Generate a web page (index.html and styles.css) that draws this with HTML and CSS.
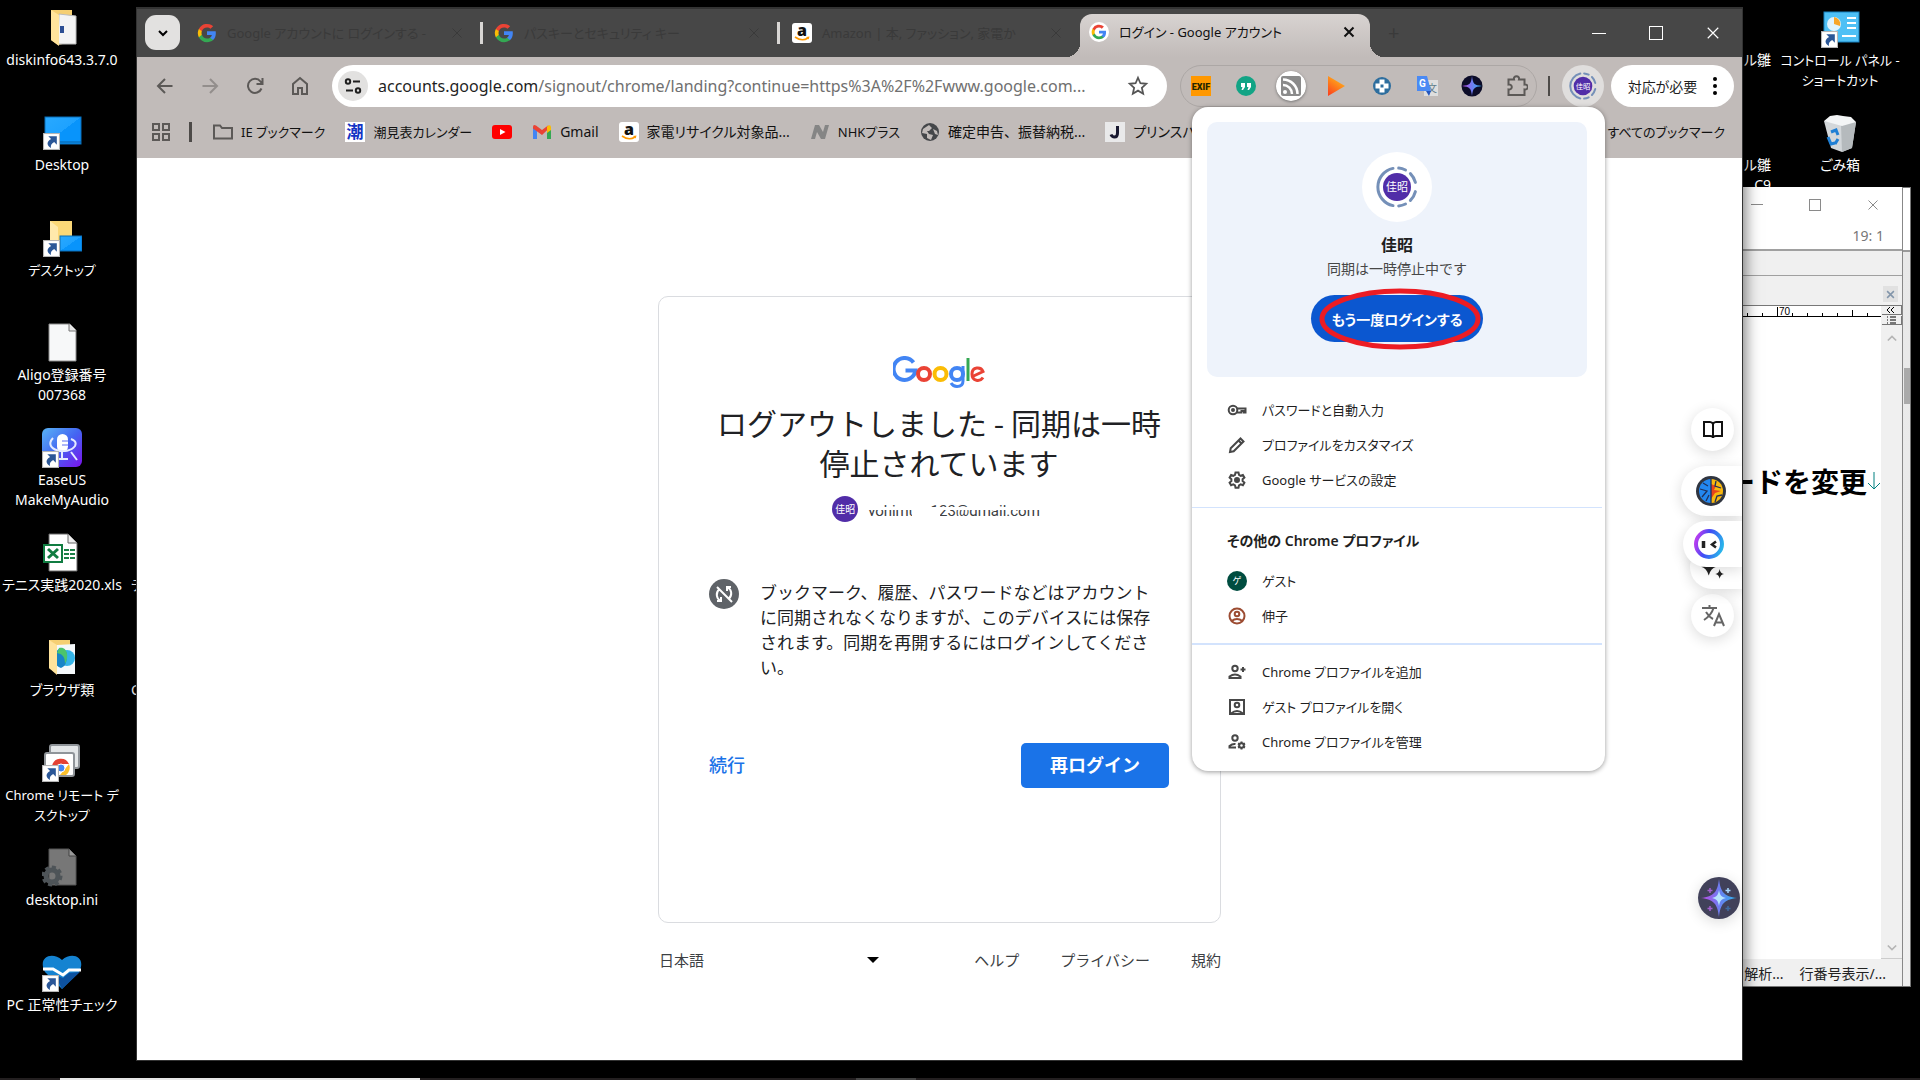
FILE: index.html
```html
<!DOCTYPE html>
<html lang="ja">
<head>
<meta charset="utf-8">
<title>ログイン - Google アカウント</title>
<link rel="stylesheet" href="styles.css">
</head>
<body>
<svg class="defs" aria-hidden="true">
  <defs>
    <linearGradient id="rainbow" x1="0" y1="0" x2="1" y2="0"><stop offset="0" stop-color="#c04be8"/><stop offset="0.5" stop-color="#6f7cf0"/><stop offset="1" stop-color="#2bb6f0"/></linearGradient>
    <linearGradient id="play" x1="0" y1="1" x2="0.6" y2="0"><stop offset="0" stop-color="#fb3b1e"/><stop offset="1" stop-color="#ffb31a"/></linearGradient>
    <linearGradient id="ring" x1="0" y1="0.4" x2="1" y2="0.7"><stop offset="0" stop-color="#b33df0"/><stop offset="0.4" stop-color="#3f4cf5"/><stop offset="1" stop-color="#29b5ea"/></linearGradient>
    <linearGradient id="ease" x1="0" y1="0" x2="1" y2="1"><stop offset="0" stop-color="#58b4f5"/><stop offset="0.5" stop-color="#4465f2"/><stop offset="1" stop-color="#7b12ec"/></linearGradient>
    <linearGradient id="screen" x1="0" y1="0" x2="1" y2="1"><stop offset="0" stop-color="#29a9ff"/><stop offset="0.5" stop-color="#1ea2ff"/><stop offset="0.5" stop-color="#0894fb"/><stop offset="1" stop-color="#0894fb"/></linearGradient>
    <symbol id="g" viewBox="0 0 24 24">
      <path fill="#4285f4" d="M22.6 12.2c0-.8-.1-1.500-.2-2.200H12v4.300h5.900c-.3 1.400-1 2.500-2.200 3.300v2.800h3.600c2.100-1.900 3.300-4.700 3.300-8.200z"/>
      <path fill="#34a853" d="M12 23c3 0 5.500-1 7.300-2.600l-3.600-2.800c-1 .7-2.200 1.100-3.700 1.100-2.900 0-5.300-1.900-6.200-4.500H2.200v2.800C4 20.500 7.700 23 12 23z"/>
      <path fill="#fbbc05" d="M5.800 14.200a6.600 6.600 0 0 1 0-4.300V7.100H2.200a11 11 0 0 0 0 9.900z"/>
      <path fill="#ea4335" d="M12 5.400c1.600 0 3.100.6 4.200 1.600l3.200-3.100A11 11 0 0 0 2.200 7.100l3.600 2.800C6.700 7.300 9.100 5.400 12 5.400z"/>
    </symbol>
    <symbol id="x" viewBox="0 0 12 12"><path d="M1.500 1.500l9 9M10.500 1.500l-9 9" stroke="currentColor" fill="none"/></symbol>
    <symbol id="shortcut" viewBox="0 0 16 16"><rect x=".5" y=".5" width="15" height="15" fill="#fff" stroke="#b5b5b5"/><path d="M5 3h8v8l-2.500-2.500C8 10 7 11.500 7.500 14 3.500 12 3 8 7.600 5.600z" fill="#2b5797"/></symbol>
    <symbol id="amazon" viewBox="0 0 20 20"><rect width="20" height="20" rx="3" fill="#fff"/><text x="10" y="13" font-family="Open Sans, sans-serif" font-weight="800" font-size="16" text-anchor="middle" fill="#111">a</text><path d="M3 14q7 5 13 1" fill="none" stroke="#f90" stroke-width="1.600"/><path d="M14 14l3.500-.5-.8 3" fill="#f90"/></symbol>
    <symbol id="avatar" viewBox="0 0 42 42"><circle cx="21" cy="21" r="14" fill="#512da8"/><path d="M17 39.600A19 19 0 0 1 17 2.400M22.700 2.100A19 19 0 0 1 29.500 4M34.400 7.600A19 19 0 0 1 39.400 16.400M39.400 25.600A19 19 0 0 1 34.400 34.400M29.500 38A19 19 0 0 1 22.700 39.900" fill="none" stroke="#7590b8" stroke-width="3" stroke-linecap="round"/><text x="21" y="25" font-size="11" font-family="Noto Sans CJK JP, sans-serif" text-anchor="middle" fill="#fff">佳昭</text></symbol>
    <symbol id="cosmic" viewBox="0 0 42 42"><circle cx="21" cy="21" r="21" fill="#41415a"/><path d="M21 2c1.500 13 5 17.500 18 19-13 1.500-16.500 6-18 19-1.500-13-5-17.500-18-19C16 19.500 19.500 15 21 2z" fill="url(#rainbow)"/><path d="M21 13c1 5 2 7 7 8-5 1-6 3-7 8-1-5-2-7-7-8 5-1 6-3 7-8z" fill="#b6e4fd"/><path d="M12 11v5M9.500 13.500h5M12 29v5M9.500 31.500h5" stroke="#a45fd0" stroke-width="1.500"/><path d="M30 11v5M27.500 13.500h5" stroke="#a9d8ff" stroke-width="1.500"/><path d="M30 29v5M27.500 31.500h5" stroke="#3f6aa0" stroke-width="1.500"/></symbol>
  </defs>
</svg>

<main class="desktop">
  <ul class="icons icons-left">
    <li><svg class="ico" viewBox="0 0 40 40"><path d="M9 2h21v32l-14 3-7-5z" fill="#f5cf73"/><path d="M17 6l17 2v28H16z" fill="#f4f4f4" stroke="#bbb"/><path d="M9 2l8 5v31l-8-6z" fill="#ffe39c"/><rect x="18" y="18" width="4" height="7" fill="#2d4f93"/></svg><span>diskinfo643.3.7.0</span></li>
    <li><svg class="ico" viewBox="0 0 40 40"><rect x="3" y="4" width="36" height="27" fill="url(#screen)" stroke="#0a6fb8"/><path d="M4 29h35" stroke="#0b5f9e"/><use href="#shortcut" x="1" y="20" width="17" height="17"/></svg><span>Desktop</span></li>
    <li><svg class="ico" viewBox="0 0 40 40"><rect x="8" y="3" width="22" height="26" fill="#fbd878"/><path d="M8 3l8 6v20H8z" fill="#ffe9ab"/><rect x="18" y="18" width="22" height="15" fill="url(#screen)" stroke="#0a6fb8"/><use href="#shortcut" x="1" y="22" width="17" height="17"/></svg><span class="kana">デスクトップ</span></li>
    <li><svg class="ico" viewBox="0 0 40 40"><path d="M7 1h21l6 6v31H7z" fill="#f7f8f9" stroke="#8c8c8c"/><path d="M27 1v7h7" fill="#e4e4e4" stroke="#777"/></svg><span>Aligo登録番号<br>007368</span></li>
    <li><svg class="ico" viewBox="0 0 40 40"><rect width="40" height="39" rx="6" fill="url(#ease)"/><rect x="15" y="6" width="11" height="18" rx="5.500" fill="#fff"/><path d="M20 13h6M20 17h6" stroke="#5c6ff0"/><path d="M11 10C0 22 26 28 33 18c2-4-1-6-4-7M20 24v7M14 31h12M29 24l6 8" fill="none" stroke="#e5ecff" stroke-width="2"/><use href="#shortcut" x="0" y="23" width="17" height="17"/></svg><span>EaseUS<br>MakeMyAudio</span></li>
    <li><svg class="ico" viewBox="0 0 40 40"><path d="M7 1h19l9 9v28H7z" fill="#fff" stroke="#666"/><path d="M26 1v9h9" fill="#eee" stroke="#666"/><path d="M22 17h11M22 21h11M22 25h11" stroke="#1c7f47" stroke-width="2" stroke-dasharray="5 1"/><rect x="2" y="12" width="18" height="17" fill="#fff" stroke="#107c41" stroke-width="2"/><path d="M6 16l10 9M16 16L6 25" stroke="#107c41" stroke-width="3"/></svg><span>テニス実践2020.xls</span></li>
    <li><svg class="ico" viewBox="0 0 40 40"><path d="M7 2h21v33H14l-7-5z" fill="#f5cf73"/><path d="M15 7l18-1v30H15z" fill="#f4f8fb"/><circle cx="25" cy="20" r="8" fill="#35b4e8"/><path d="M14 15c3-9 12-4 11 4s-2 9-6 11c-7-2-6-8-5-15z" fill="#1784c7"/><path d="M17 10c9-2 10 10 6 16 0-8-3-10-8-11z" fill="#4bc46c"/><path d="M7 2l8 5v30l-8-7z" fill="#ffe39c"/></svg><span>ブラウザ類</span></li>
    <li><svg class="ico" viewBox="0 0 40 40"><rect x="8" y="2" width="29" height="23" rx="2" fill="#e3e6e8" stroke="#8f9499" stroke-width="2"/><rect x="3" y="10" width="29" height="23" rx="2" fill="#fff" stroke="#8f9499" stroke-width="2"/><path d="M10 23a9 9 0 0 1 17-2H19z" fill="#e34133"/><path d="M27 21a9 9 0 0 1-3 11h-6z" fill="#fbc02d"/><circle cx="19" cy="25" r="4" fill="#4285f4" stroke="#fff"/><use href="#shortcut" x="0" y="22" width="17" height="17"/></svg><span class="kana">Chrome リモート デ<br>スクトップ</span></li>
    <li><svg class="ico" viewBox="0 0 40 40"><path d="M7 1h20l7 7v29H7z" fill="#777" stroke="#555"/><path d="M27 1v7h7" fill="#999" stroke="#444"/><circle cx="10" cy="28" r="6" fill="none" stroke="#4e5458" stroke-width="5"/><circle cx="10" cy="28" r="9" fill="none" stroke="#4e5458" stroke-width="3" stroke-dasharray="4 3"/></svg><span>desktop.ini</span></li>
    <li><svg class="ico" viewBox="0 0 40 40"><path d="M20 36L3 19C-5 4 10-2 20 7c10-9 25-3 17 12z" fill="#1583d1"/><path d="M13 22l8 3 6-5 11-1-18 17z" fill="#0d52a0"/><path d="M1 16h10l10 6 6-5h12" fill="none" stroke="#fff" stroke-width="3"/><use href="#shortcut" x="0" y="22" width="17" height="17"/></svg><span>PC 正常性チェック</span></li>
  </ul>
  <ul class="icons icons-second"><li><span>テ</span></li><li><span>C</span></li></ul>
  <ul class="icons icons-third"><li><span>メール雛</span></li><li><span>メール雛<br>C9</span></li></ul>
  <ul class="icons icons-right">
    <li><svg class="ico" viewBox="0 0 40 40"><rect x="4" y="4" width="35" height="30" fill="#4fc0f5" stroke="#1883c2"/><circle cx="14" cy="16" r="7" fill="#dff3ff"/><path d="M14 16V9a7 7 0 0 1 6 9z" fill="#f7a52a"/><path d="M27 10h9M27 15h9M27 20h9M22 28h14" stroke="#fff" stroke-width="2"/><use href="#shortcut" x="1" y="23" width="17" height="17"/></svg><span class="kana">コントロール パネル -<br>ショートカット</span></li>
    <li><svg class="ico" viewBox="0 0 40 40"><path d="M4 8l32 1-4 26-10 4-11-4z" fill="#d3d7da"/><path d="M21 11l15-2-4 26-10 4z" fill="#b5babd"/><path d="M4 8l6-5 7-1 6 1 8 1 5 5-14 4z" fill="#f3f5f6"/><path d="M11 19l5-2 2 5M8 24l3 7 4-1M18 26l-3 5" fill="none" stroke="#1f7fd4" stroke-width="3"/></svg><span>ごみ箱</span></li>
  </ul>

  <section class="editor-back" aria-hidden="true"><i></i></section>
  <section class="editor">
    <div class="ed-title"><button aria-label="最小化"><svg viewBox="0 0 12 12"><path d="M0 5.500h12" stroke="currentColor"/></svg></button><button aria-label="最大化"><svg viewBox="0 0 12 12"><rect x=".5" y=".5" width="11" height="11" fill="none" stroke="currentColor"/></svg></button><button aria-label="閉じる"><svg><use href="#x"/></svg></button></div>
    <div class="ed-pos">19: 1</div>
    <div class="ed-band"></div>
    <div class="ed-tabs"><button aria-label="タブを閉じる"><svg stroke-width="2"><use href="#x"/></svg></button></div>
    <div class="ed-main">
      <div class="ed-doc">
        <div class="ruler"><svg viewBox="0 0 140 12"><path d="M0 10.500h140M6.500 7v4M21.500 7v4M36.500 1v10M51.500 7v4M66.500 7v4M81.500 7v4M96.500 7v4M111.500 4v7M126.500 7v4" stroke="#000" fill="none"/><text x="38" y="9" font-size="10" font-family="Liberation Sans, sans-serif">70</text></svg></div>
        <p class="ed-text">ードを変更<svg viewBox="0 0 14 20" width="14" height="20"><path d="M7 1v17M1 12l6 6 6-6" fill="none" stroke="#008080"/></svg></p>
      </div>
      <div class="ed-scroll">
        <button aria-label="分割"><svg viewBox="0 0 18 8"><path d="M8 1L5 4l3 3M12 1L9 4l3 3"/></svg></button>
        <button aria-label="一覧"><svg viewBox="0 0 18 8"><path d="M8 1h6M8 4h6M8 7h6M5 1h1M5 4h1M5 7h1"/></svg></button>
        <svg class="arrow" viewBox="0 0 12 8"><path d="M1 7l5-5 5 5"/></svg><svg class="arrow end" viewBox="0 0 12 8"><path d="M1 1l5 5 5-5"/></svg>
      </div>
    </div>
    <div class="ed-status"><span>解析...</span><span>行番号表示/...</span></div>
  </section>

  <section class="browser">
    <header class="tabstrip">
      <button class="tab-search" aria-label="タブを検索"><svg viewBox="0 0 12 12" width="12" height="12"><path d="M2 4l4 4 4-4" fill="none" stroke="#000" stroke-width="2"/></svg></button>
      <div class="tab tab-a"><svg class="fav"><use href="#g"/></svg><span>Google アカウントに ログインする -</span><button aria-label="閉じる"><svg><use href="#x"/></svg></button></div>
      <div class="tab tab-b"><svg class="fav"><use href="#g"/></svg><span>パスキーとセキュリティ キー</span><button aria-label="閉じる"><svg><use href="#x"/></svg></button></div>
      <div class="tab tab-c"><svg class="fav"><use href="#amazon"/></svg><span>Amazon | 本, ファッション, 家電か</span><button aria-label="閉じる"><svg><use href="#x"/></svg></button></div>
      <div class="tab active"><svg class="fav" viewBox="0 0 20 20"><circle cx="10" cy="10" r="10" fill="#fff"/><use href="#g" x="2" y="2" width="16" height="16"/></svg><span>ログイン - Google アカウント</span><button aria-label="閉じる"><svg stroke-width="2"><use href="#x"/></svg></button></div>
      <button class="new-tab" aria-label="新しいタブ">+</button>
      <div class="win-buttons"><button aria-label="最小化"><svg viewBox="0 0 14 14"><path d="M0 7.500h14" stroke="#fff"/></svg></button><button aria-label="最大化"><svg viewBox="0 0 14 14"><rect x=".5" y=".5" width="13" height="13" fill="none" stroke="#fff"/></svg></button><button aria-label="閉じる"><svg><use href="#x"/></svg></button></div>
    </header>

    <div class="toolbar">
      <nav class="nav">
        <button aria-label="戻る"><svg viewBox="0 0 20 20"><path d="M17.500 10H3.500M10 3l-7 7 7 7"/></svg></button>
        <button aria-label="進む" class="off"><svg viewBox="0 0 20 20"><path d="M2.500 10h14M10 3l7 7-7 7"/></svg></button>
        <button aria-label="再読み込み"><svg viewBox="0 0 20 20"><path d="M16.500 12.500a7 7 0 1 1-1-7L17 7.500M17.500 2v6h-6"/></svg></button>
        <button aria-label="ホーム"><svg viewBox="0 0 20 20"><path d="M3 18V8l7-6 7 6v10h-5v-6H8v6z"/></svg></button>
      </nav>
      <div class="omnibox">
        <button class="site" aria-label="サイト情報"><svg viewBox="0 0 20 20" width="20" height="20" fill="none" stroke="#1f1f1f" stroke-width="2"><circle cx="5" cy="5.500" r="2.200"/><path d="M10 5.500h7M3 14.500h7"/><circle cx="15" cy="14.500" r="2.200"/></svg></button>
        <span class="url"><b>accounts.google.com</b>/signout/chrome/landing?continue=https%3A%2F%2Fwww.google.com...</span>
        <button class="star" aria-label="ブックマーク"><svg viewBox="0 0 20 20" width="22" height="22"><path d="M10 2.500l2.200 5 5.300.5-4 3.600 1.200 5.400-4.700-2.800L5.300 17l1.200-5.400-4-3.600 5.300-.5z" fill="none" stroke="#555" stroke-width="1.600"/></svg></button>
      </div>
      <div class="extensions">
        <svg viewBox="0 0 22 22"><rect x="1" y="1" width="20" height="20" fill="#ff9800"/><text x="11" y="15" font-size="9" font-weight="900" text-anchor="middle" font-family="Roboto, sans-serif" fill="#252500">EXIF</text></svg>
        <svg viewBox="0 0 22 22"><circle cx="11" cy="11" r="10" fill="#12a485"/><path d="M6 8h4v4l-2 3H6.500l1-3H6zM12 8h4v4l-2 3h-1.500l1-3H12z" fill="#fff"/></svg>
        <svg class="round" viewBox="0 0 30 30"><circle cx="15" cy="15" r="15" fill="#fff"/><rect x="5" y="5" width="20" height="20" rx="2" fill="#8b8b8b"/><circle cx="9" cy="21" r="2" fill="#fff"/><path d="M7 14a9 9 0 0 1 9 9M7 8.500A14.500 14.500 0 0 1 21.500 23" fill="none" stroke="#fff" stroke-width="2.500"/></svg>
        <svg viewBox="0 0 22 22"><path d="M3 1l17 10L3 21z" fill="url(#play)"/></svg>
        <svg viewBox="0 0 22 22"><circle cx="11" cy="11" r="9" fill="#2e6e9e"/><path d="M11 4.500v13M4.500 11h13" stroke="#fff" stroke-width="5"/><path d="M9.500 11h3" stroke="#2e6e9e" stroke-width="3"/></svg>
        <svg viewBox="0 0 22 22"><rect x="8" y="5" width="14" height="16" fill="#dedede"/><text x="11" y="17" font-size="10" font-family="Noto Sans CJK JP, sans-serif" fill="#607d8b">文</text><path d="M1 1h10l4 15H1z" fill="#4a8af4"/><text x="3" y="12" font-size="10" font-weight="700" fill="#fff" font-family="Roboto, sans-serif">G</text><path d="M10 16h5l-2 5z" fill="#2456bd"/></svg>
        <svg viewBox="0 0 22 22"><circle cx="11" cy="11" r="10.500" fill="#0c0c28"/><path d="M11 1c1 8 2 9 10 10-8 1-9 2-10 10-1-8-2-9-10-10 8-1 9-2 10-10z" fill="url(#rainbow)"/></svg>
        <svg viewBox="0 0 22 22"><path d="M2.500 4.500h5.500a2.600 2.600 0 1 1 5 0h5.500v5a2.600 2.600 0 1 1 0 5v5.500h-16v-5.500a2.600 2.600 0 1 0 0-5z" fill="none" stroke="#5c5957" stroke-width="2"/></svg>
      </div>
      <i class="bar"></i>
      <button class="profile" aria-label="プロファイル"><svg width="28" height="28"><use href="#avatar"/></svg></button>
      <button class="chip">対応が必要<svg viewBox="0 0 4 20" width="4" height="20"><circle cx="2" cy="3" r="2"/><circle cx="2" cy="10" r="2"/><circle cx="2" cy="17" r="2"/></svg></button>
    </div>

    <nav class="bookmarks">
      <button aria-label="アプリ"><svg viewBox="0 0 20 20" width="20" height="20" fill="none" stroke="#5c5957" stroke-width="2"><path d="M2 2h6v6H2zM12 2h6v6h-6zM2 12h6v6H2zM12 12h6v6h-6z"/></svg></button>
      <i class="bar"></i>
      <a href="#" class="kana"><svg viewBox="0 0 20 20" fill="none" stroke="#5c5957" stroke-width="2"><path d="M1 16.500v-13h6l2 2.500h10v10.500z"/></svg>IE ブックマーク</a>
      <a href="#" class="kana"><svg viewBox="0 0 20 20"><rect width="20" height="20" fill="#fff"/><text x="10" y="16" font-size="17" font-weight="700" text-anchor="middle" font-family="Noto Sans CJK JP, sans-serif" fill="#1534c4">潮</text></svg>潮見表カレンダー</a>
      <a href="#" aria-label="YouTube"><svg viewBox="0 0 20 20"><rect y="3" width="20" height="14" rx="3" fill="#f00"/><path d="M8 7l5.500 3L8 13z" fill="#fff"/></svg></a>
      <a href="#"><svg viewBox="0 0 20 20"><path d="M1 17V5l4 3v9z" fill="#4285f4"/><path d="M19 17V5l-4 3v9z" fill="#34a853"/><path d="M1 5q0-3 3-1.500L10 8l6-4.500 2 2L10 13 1 6.500z" fill="#ea4335"/><path d="M15 4.500q4-3 4 1V8l-4 3z" fill="#fbbc04"/></svg>Gmail</a>
      <a href="#"><svg><use href="#amazon"/></svg>家電リサイクル対象品...</a>
      <a href="#" class="kana"><svg viewBox="0 0 20 20"><path d="M1 17L5 3h4l4 7 2-7h4l-4 14h-4l-4-7-2 7z" fill="#858585"/></svg>NHKプラス</a>
      <a href="#" class="even"><svg viewBox="0 0 20 20"><circle cx="10" cy="10" r="9" fill="#45474a"/><path d="M3 7l6-4 3 3-3 3H7l2 3 4 1-2 5-4-2v-4L2 11zM13 7l4 2 1 4-3-1z" fill="#c1bbb9"/></svg>確定申告、振替納税...</a>
      <a href="#"><svg viewBox="0 0 20 20"><rect width="20" height="20" fill="#e9e9ea"/><path d="M12.500 4v7q0 4-3 4-2.500 0-3.500-2.500" fill="none" stroke="#181830" stroke-width="3"/></svg>プリンスパ</a>
      <a href="#" class="all kana">すべてのブックマーク</a>
    </nav>

    <div class="page">
      <div class="account">
        <article class="card">
          <div class="logo" aria-label="Google"><svg viewBox="0 0 92 32" width="92" height="32" fill="none" stroke-width="4"><path d="M20.500 6.500A11 11 0 1 0 22.500 14.500H12.500" stroke="#4285f4"/><circle cx="31" cy="18" r="6" stroke="#ea4335"/><circle cx="47.500" cy="18" r="6" stroke="#fbbc05"/><circle cx="64" cy="18" r="6" stroke="#4285f4"/><path d="M70 10v15q0 5.500-6 5.500-4 0-6-3.500" stroke="#4285f4" stroke-width="3"/><path d="M75 2v23" stroke="#34a853" stroke-width="3"/><path d="M79.500 20.500L90 15.500c-2-5-11-5-11 2.500s8 8 11 3.500" stroke="#ea4335" stroke-width="3"/></svg></div>
          <h1>ログアウトしました - 同期は一時停止されています</h1>
          <p class="who"><i>佳昭</i><span>yohimuro123@gmail.com</span></p>
          <div class="notice">
            <svg viewBox="0 0 30 30" width="30" height="30"><circle cx="15" cy="15" r="15" fill="#5f6368"/><g fill="none" stroke="#fff" stroke-width="2"><path d="M11 21.500a7 7 0 0 1-1-11M19 8.500a7 7 0 0 1 1 11M8 22h4v-4M22 8h-4v4M8 8l15 15"/></g></svg>
            <p>ブックマーク、履歴、パスワードなどはアカウントに同期されなくなりますが、このデバイスには保存されます。同期を再開するにはログインしてください。</p>
          </div>
          <div class="actions"><a href="#">続行</a><button>再ログイン</button></div>
        </article>
        <footer>
          <button class="lang">日本語<svg viewBox="0 0 12 6" width="12" height="6"><path d="M0 0h12L6 6z"/></svg></button>
          <nav><a href="#">ヘルプ</a><a href="#">プライバシー</a><a href="#">規約</a></nav>
        </footer>
      </div>

      <aside class="floats">
        <button class="f-round" aria-label="リーダー"><svg viewBox="0 0 22 22" width="22" height="22" fill="none" stroke="#111" stroke-width="2"><path d="M11 5v14M11 5q-1-2-3-2H2v14h6q3 0 3 2 0-2 3-2h6V3h-6q-2 0-3 2z"/></svg></button>
        <button class="f-pill" aria-label="AI"><svg viewBox="0 0 30 30" width="30" height="30"><circle cx="15" cy="15" r="15" fill="#303540"/><path d="M15 3a12 12 0 0 0 0 24z" fill="#2387f0"/><path d="M15 3a12 12 0 0 1 0 24z" fill="#f9b80e"/><path d="M15 8l5 2-2 4 7 1-6 2-4 6z" fill="#e8441c"/><path d="M15 3v24M4 13l7 2-5 6M7 7l5 3M13 19l-3 6M20 5l-1 5 6 2M19 26l2-6 5-1" fill="none" stroke="#20305a" stroke-width="1.300"/></svg></button>
        <button class="f-pill robot" aria-label="アシスタント"><svg viewBox="0 0 30 30" width="30" height="30"><circle cx="15" cy="15" r="13" fill="#fff" stroke="url(#ring)" stroke-width="4"/><path d="M9.500 12v7" stroke="#222" stroke-width="3.500"/><path d="M22 12.500l-4 3 4 3" fill="none" stroke="#222" stroke-width="2.500"/></svg></button>
        <button class="f-pill spark" aria-label="生成"><svg viewBox="0 0 22 22" width="24" height="24"><path d="M8 1q1 8 7 8-5 1-7 8-2-7-7-8 6 0 7-8zM18 11q.5 4 4 4.500-3.500.5-4 4.500-.5-4-4-4.500 3.500-.5 4-4.500z" fill="#222"/></svg></button>
        <button class="f-round" aria-label="翻訳"><svg viewBox="0 0 24 24" width="24" height="24" fill="none" stroke="#666" stroke-width="2"><path d="M1 4h15M8.500 1v3M12.500 4q-2 7-9.500 12M5 8q3 5 7 7M13 22l5-12 5 12M15 18.500h6.500"/></svg></button>
        <button class="f-cosmic" aria-label="AI 検索"><svg width="42" height="42"><use href="#cosmic"/></svg></button>
      </aside>
    </div>

    <div class="popover" role="menu">
      <div class="me">
        <div class="face"><svg width="42" height="42"><use href="#avatar"/></svg></div>
        <h2>佳昭</h2>
        <p class="even">同期は一時停止中です</p>
        <button class="again">もう一度ログインする<svg class="mark" viewBox="0 0 162 62"><ellipse cx="81" cy="31" rx="78" ry="28" fill="none" stroke="#ec1c24" stroke-width="5"/></svg></button>
      </div>
      <ul>
        <li><svg viewBox="0 0 20 20"><circle cx="6" cy="10" r="4.300"/><circle cx="6" cy="10" r="1" /><path d="M10 8.500h8.500v4h-1.500v-1.500h-2.500v1.500H10"/></svg>パスワードと自動入力</li>
        <li><svg viewBox="0 0 20 20"><path d="M3 17l.7-3.700L13.500 3.500l3 3L6.700 16.300zM11.500 5.500l3 3"/></svg>プロファイルをカスタマイズ</li>
        <li><svg viewBox="0 0 20 20"><path d="M8.500 2.500h3l.5 2.300 1.700 1 2.200-.8 1.500 2.600-1.800 1.600v1.800l1.800 1.600-1.500 2.600-2.200-.8-1.700 1-.5 2.300h-3L8 15.400l-1.700-1-2.200.8-1.500-2.600L4.400 11V9.200L2.600 7.600 4.100 5l2.200.8L8 4.800z"/><circle cx="10" cy="10" r="2" fill="#474747"/></svg>Google サービスの設定</li>
      </ul>
      <h3>その他の Chrome プロファイル</h3>
      <ul class="others">
        <li><i>ゲ</i>ゲスト</li>
        <li><svg class="rust" viewBox="0 0 20 20"><circle cx="10" cy="10" r="7.500"/><circle cx="10" cy="8" r="2.300"/><path d="M4.500 15q5.500-4 11 0"/></svg>伸子</li>
      </ul>
      <ul class="last">
        <li><svg viewBox="0 0 20 20"><circle cx="8" cy="6.500" r="2.700"/><path d="M2.500 16v-1.500q5.500-4 11 0V16zM16 5v5M13.500 7.500h5"/></svg>Chrome プロファイルを追加</li>
        <li><svg viewBox="0 0 20 20"><path d="M3 3h14v14H3zM4 16.500q6-5 12 0"/><circle cx="10" cy="8" r="2.300"/></svg>ゲスト プロファイルを開く</li>
        <li><svg viewBox="0 0 20 20"><circle cx="8" cy="6" r="2.700"/><path d="M9 15.500H2.500V14q3-2.500 6-2"/><circle cx="14.500" cy="13.500" r="2.300"/><path d="M14.500 9.500v2M14.500 15.500v2M11 11.500l2 1M16 14.500l2 1M11 15.500l2-1M16 12.500l2-1"/></svg>Chrome プロファイルを管理</li>
      </ul>
    </div>
  </section>
  <div class="taskbar"><i></i><b></b></div>
</main>
</body>
</html>
```

FILE: styles.css
```css
* { box-sizing: border-box; }
body { margin: 0; background: #000; font-family: "Noto Sans", "Noto Sans CJK JP", sans-serif; font-size: 14px; color: #1f1f1f; }
button { border: 0; padding: 0; background: none; font: inherit; color: inherit; display: flex; align-items: center; justify-content: center; }
ul { list-style: none; margin: 0; padding: 0; }
h1, h2, h3, p { margin: 0; font-weight: 400; }
a { color: inherit; text-decoration: none; }
i, b { font-style: normal; font-weight: 400; }
.kana { font-size: 13px; }
.even { font-feature-settings: normal; }
.defs { position: absolute; width: 0; height: 0; }
.desktop { position: relative; height: 100vh; min-height: 1080px; overflow: hidden; background: #000; font-feature-settings: "palt" 1; }

/* desktop icons */
.icons { position: absolute; top: 8px; width: 124px; color: #fff; }
.icons li { height: 105px; display: flex; flex-direction: column; align-items: center; gap: 2px; text-align: center; line-height: 20px; white-space: nowrap; }
.ico { width: 40px; height: 40px; flex: none; }
.icons-left { left: 0; }
.icons-second { left: 131px; top: 575px; width: 20px; }
.icons-second li { align-items: flex-start; }
.icons-third { right: 149px; top: 50px; width: 100px; }
.icons-third li { align-items: flex-end; text-align: right; }
.icons-right { right: 18px; }

/* text editor behind the browser */
.editor-back { position: absolute; top: 187px; right: 9px; bottom: 93px; width: 200px; background: linear-gradient(#fff 62px, #999 62px, #999 64px, #e8e8e8 64px, #efefef); border: 1px solid #777; }
.editor-back i { position: absolute; right: 0; top: 180px; width: 6px; height: 36px; background: #aaa; }
.editor { position: absolute; top: 187px; right: 17px; bottom: 94px; width: 400px; background: #fff; border-right: 1px solid #888; display: flex; flex-direction: column; color: #777; }
.editor > * { flex: none; }
.ed-title { height: 36px; display: flex; justify-content: flex-end; gap: 46px; padding-right: 23px; color: #8a8a8a; }
.ed-title svg { width: 12px; height: 12px; }
.ed-pos { height: 26px; line-height: 26px; padding-right: 18px; text-align: right; }
.ed-band { height: 27px; background: #f0f0f0; border-top: 2px solid #a0a0a0; border-bottom: 1px solid #a0a0a0; }
.ed-tabs { height: 30px; background: #f0f0f0; display: flex; justify-content: flex-end; align-items: flex-end; padding: 0 4px 3px 0; border-bottom: 1px solid #777; }
.ed-tabs button { width: 15px; height: 16px; background: #e1e1e1; color: #8295aa; }
.ed-tabs svg { width: 9px; height: 9px; }
.editor > .ed-main { flex: 1; display: flex; min-height: 0; }
.ed-doc { flex: 1; }
.ruler { display: flex; justify-content: flex-end; height: 12px; }
.ruler svg { width: 140px; height: 12px; }
.ed-text { margin-top: 141px; display: flex; justify-content: flex-end; align-items: center; font: 700 28px/44px "Noto Sans CJK JP", sans-serif; color: #000; font-feature-settings: normal; }
.ed-scroll { width: 21px; background: #f0f0f0; display: flex; flex-direction: column; align-items: center; padding-bottom: 6px; gap: 1px; border-bottom: 1px solid #ccc; }
.ed-scroll button { width: 20px; height: 9px; border-right: 1px solid #777; border-bottom: 1px solid #777; }
.ed-scroll button svg { width: 18px; height: 8px; fill: none; stroke: #000; }
.ed-scroll .arrow { width: 10px; height: 8px; margin-top: 8px; fill: none; stroke: #b5b5b5; stroke-width: 2; }
.ed-scroll .end { margin-top: auto; }
.ed-status { height: 27px; background: #f0f0f0; color: #222; display: flex; justify-content: flex-end; align-items: center; gap: 16px; padding-right: 16px; }

/* browser window */
.browser { position: absolute; left: 137px; top: 8px; right: 178px; bottom: 20px; display: flex; flex-direction: column; background: #fff; box-shadow: 0 0 0 1px #333, 2px 3px 14px 1px rgba(0,0,0,.55); }
.tabstrip { flex: none; height: 49px; background: #474747; display: flex; align-items: center; padding: 0 0 1px 8px; color: #3a3a3a; border-top: 1px solid #333; }
.tab-search { width: 35px; height: 35px; margin-right: 8px; border-radius: 11px; background: #e2e1e0; }
.tab { display: flex; align-items: center; height: 22px; padding: 0 17px 0 9px; gap: 10px; border-right: 3px solid #d8d6d4; font-size: 13px; }
.tab span { flex: 1; white-space: nowrap; }
.tab button svg { width: 12px; height: 12px; }
.fav { width: 20px; height: 20px; flex: none; }
.tab-a { width: 295px; }
.tab-b { width: 297px; padding-left: 11px; }
.tab-c { width: 299px; padding-left: 12px; border-right: 0; }
.tab.active { position: relative; width: 290px; height: 43px; align-self: flex-end; margin: 0 0 -1px 1px; padding: 0 15px 8px 9px; border: 0; border-radius: 12px 12px 0 0; background: linear-gradient(#d8d3d1, #c1bbb9); color: #111; }
.tab.active::before, .tab.active::after { content: ""; position: absolute; bottom: 0; width: 14px; height: 14px; }
.tab.active::before { left: -14px; background: radial-gradient(circle at 0 0, transparent 14px, #c1bbb9 14px); }
.tab.active::after { right: -14px; background: radial-gradient(circle at 100% 0, transparent 14px, #c1bbb9 14px); }
.new-tab { margin-left: 18px; font-size: 20px; }
.win-buttons { margin-left: auto; display: flex; gap: 43px; padding-right: 22px; color: #fff; }
.win-buttons svg { width: 14px; height: 14px; }
.toolbar { flex: none; height: 58px; background: #c1bbb9; display: flex; align-items: center; padding: 0 8px 0 18px; }
.nav { display: flex; gap: 25px; margin-right: 22px; }
.nav svg { width: 20px; height: 20px; fill: none; stroke: #5c5957; stroke-width: 2; }
.nav .off { opacity: .45; }
.omnibox { flex: 1; min-width: 0; height: 42px; border-radius: 21px; background: #fff; display: flex; align-items: center; padding: 0 18px 0 6px; }
.site { width: 30px; height: 30px; border-radius: 50%; background: #e2e1e0; flex: none; }
.url { flex: 1; margin-left: 10px; white-space: nowrap; font-size: 16px; color: #707070; }
.url b { color: #1f1f1f; }
.extensions { height: 42px; margin-left: 13px; width: 357px; border: 1px solid #aca7a5; border-radius: 21px; display: flex; justify-content: space-between; align-items: center; padding: 0 8px 0 9px; }
.extensions svg { width: 22px; height: 22px; }
.extensions .round { width: 30px; height: 30px; margin: 0 -4px; border-radius: 50%; box-shadow: 0 1px 3px #777; }
.bar { width: 3px; height: 20px; background: #4d4a48; flex: none; }
.toolbar .bar { margin: 0 12px 0 11px; width: 2px; }
.profile { width: 42px; height: 42px; border-radius: 50%; background: #e0dedd; }
.chip { margin-left: 7px; width: 123px; height: 42px; border-radius: 21px; background: #fff; gap: 16px; }
.bookmarks { flex: none; height: 43px; background: #c1bbb9; display: flex; align-items: center; padding: 0 17px 9px 14px; color: #111; white-space: nowrap; }
.bookmarks .bar { margin: 0 21px 0 18px; }
.bookmarks a { display: flex; align-items: center; gap: 8px; margin-right: 20px; line-height: 20px; }
.bookmarks a svg { width: 20px; height: 20px; }
.bookmarks .all { margin: 0 0 0 auto; }

/* account page */
.page { position: relative; flex: 1; min-height: 0; display: flex; justify-content: center; overflow: hidden; }
.account { width: 563px; padding-top: 138px; font-family: "Noto Sans CJK JP", sans-serif; font-feature-settings: normal; }
.card { height: 627px; border: 1px solid #dadce0; border-radius: 10px; padding: 59px 51px 0 50px; }
.logo { display: flex; justify-content: center; height: 32px; }
.card h1 { margin-top: 14px; text-align: center; font-size: 30px; line-height: 40px; color: #202124; word-break: break-all; }
.who { display: flex; align-items: center; justify-content: center; gap: 10px; margin-top: 13px; height: 28px; }
.who i { width: 26px; height: 26px; line-height: 26px; border-radius: 50%; background: #512da8; color: #fff; font-size: 10px; text-align: center; }
/* the address is partly painted out */
.who span { position: relative; height: 14px; padding-right: 6px; font: 15px/18px Roboto, sans-serif; color: #3c4043; overflow: hidden; }
.who span::after { content: ""; position: absolute; left: 0; right: 0; top: 5px; height: 3px; background: #fff; }
.who span::before { content: ""; position: absolute; left: 44px; top: 5px; width: 28px; height: 14px; background: #fff; }
.notice { display: flex; gap: 21px; margin-top: 56px; }
.notice svg { flex: none; }
.notice p { width: 402px; font-size: 17px; line-height: 25px; color: #202124; }
.actions { display: flex; align-items: center; justify-content: space-between; margin-top: 64px; font-size: 18px; line-height: 26px; font-weight: 500; }
.actions a { color: #1a73e8; padding-bottom: 3px; }
.actions button { width: 148px; height: 45px; padding-bottom: 3px; border-radius: 5px; background: #1a73e8; color: #fff; font-weight: 700; }
.account footer { display: flex; justify-content: space-between; margin-top: 26px; font-size: 15px; line-height: 22px; color: #3c4043; }
.lang { width: 220px; justify-content: space-between; margin-left: 1px; }
.account footer nav { display: flex; gap: 41px; }

/* side buttons pinned over the page */
.floats { position: absolute; right: 0; top: 250px; width: 62px; display: flex; flex-direction: column; align-items: flex-end; }
.floats button { background: #fff; box-shadow: 0 3px 14px rgba(0,0,0,.14); flex: none; }
.f-round { width: 43px; height: 43px; margin-right: 8px; border-radius: 50%; }
.f-pill { position: relative; z-index: 1; width: 61px; height: 50px; margin: 15px 0 5px; padding-right: 1px; border-radius: 25px 0 0 25px; }
.f-pill.robot { width: 59px; height: 46px; margin: 0; padding-right: 8px; }
.f-pill.spark { z-index: 0; width: 52px; height: 44px; margin: -22px 0 5px; padding: 4px 8px 0 0; }
.floats .f-cosmic { margin: 240px 2px 0 0; border-radius: 50%; }

/* profile menu */
.popover { position: absolute; right: 137px; top: 99px; width: 413px; height: 664px; padding-top: 15px; border-radius: 16px; background: #fff; box-shadow: 0 1px 5px rgba(0,0,0,.4); }
.me { height: 255px; margin: 0 18px 0 15px; padding-top: 30px; border-radius: 10px; background: #eef3fb; display: flex; flex-direction: column; align-items: center; }
.face { width: 70px; height: 70px; border-radius: 50%; background: #fff; display: flex; align-items: center; justify-content: center; }
.me h2 { margin-top: 11px; font-size: 16px; line-height: 24px; font-weight: 700; }
.me p { line-height: 24px; font-size: 14px; color: #474747; }
.again { position: relative; width: 172px; height: 47px; margin-top: 14px; border-radius: 24px; background: #0b57d0; color: #fff; font-size: 14px; font-weight: 700; }
.mark { position: absolute; left: 8px; top: -7px; width: 162px; height: 62px; }
.popover ul { padding: 15px 0 10px; margin-right: 3px; border-bottom: 1px solid #d3e3fd; font-size: 13px; }
.popover li { height: 35px; display: flex; align-items: center; gap: 15px; padding-left: 35px; }
.popover li svg { width: 20px; height: 20px; fill: none; stroke: #474747; stroke-width: 2; }
.popover li .rust { stroke: #9c4c32; }
.popover li i { width: 20px; height: 20px; line-height: 20px; border-radius: 50%; background: #004d40; color: #fff; font-size: 9px; text-align: center; }
.popover h3 { padding: 21px 0 0 35px; font-size: 14px; line-height: 24px; font-weight: 600; }
.popover .others { padding: 10px 0; border-bottom-width: 2px; }
.popover .last { padding-top: 9px; border: 0; }

.taskbar { position: absolute; left: 0; right: 0; bottom: 0; height: 2px; background: #231f20; display: flex; }
.taskbar i { width: 360px; margin-left: 60px; background: #e6e6e6; }
.taskbar b { width: 60px; margin-left: 436px; background: #444; }
```
